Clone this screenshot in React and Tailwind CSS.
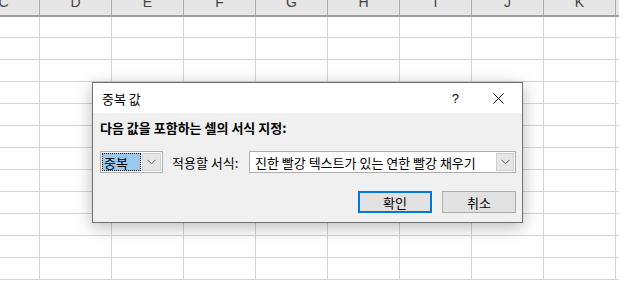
import React from "react";

const cols = ["C", "D", "E", "F", "G", "H", "I", "J", "K", "L"];
const rows = Array.from({ length: 12 }, (_, i) => i);

function Chevron() {
  return (
    <svg width="9" height="6" viewBox="0 0 9 6" fill="none">
      <path d="M0.5 0.8 L4.5 4.8 L8.5 0.8" stroke="#5a5a5a" strokeWidth="1" />
    </svg>
  );
}

function Sheet() {
  return (
    <div className="-ml-[32px] flex flex-col">
      {/* column header */}
      <div className="flex h-[17px] bg-[#e6e6e6] border-b-2 border-[#9e9e9e]">
        {cols.map((c) => (
          <div
            key={c}
            className="w-[72px] shrink-0 border-r border-[#ababab] flex justify-center overflow-hidden"
          >
            <span className="-mt-[5px] text-[14px] leading-[14px] text-[#444]">{c}</span>
          </div>
        ))}
      </div>
      {rows.map((r) => (
        <div
          key={r}
          className={`flex border-b border-[#d4d4d4] ${r === 0 ? "h-[21px]" : "h-[22px]"}`}
        >
          {cols.map((c) => (
            <div key={c} className="w-[72px] shrink-0 border-r border-[#d4d4d4]" />
          ))}
        </div>
      ))}
    </div>
  );
}

export default function App() {
  return (
    <div
      className="relative w-[619px] h-[283px] overflow-hidden bg-white"
      style={{ fontFamily: '"Liberation Sans", "Noto Sans CJK KR", sans-serif' }}
    >
      <Sheet />

      {/* dialog */}
      <div
        className="absolute left-[92px] top-[82px] w-[431px] h-[141px] border border-[#707070] bg-[#f0f0f0] shadow-[0_4px_16px_rgba(0,0,0,0.28)] flex flex-col text-[13px] text-black"
        style={{ fontFamily: '"Noto Sans CJK KR", sans-serif' }}
      >
        <div className="h-[30px] bg-white flex items-center pl-[9px]">
          <span className="leading-none">중복 값</span>
          <span className="ml-auto mr-[34px] text-[13px] leading-none" style={{ fontFamily: '"Liberation Sans", sans-serif' }}>?</span>
          <svg width="11" height="11" viewBox="0 0 11 11" className="mr-[18px]">
            <path d="M0.5 0.5 L10.5 10.5 M10.5 0.5 L0.5 10.5" stroke="#000" strokeWidth="1" />
          </svg>
        </div>

        <div className="pl-[7px] pr-[6px]">
          <div className="mt-[7px] h-[16px] leading-[16px] font-bold">다음 값을 포함하는 셀의 서식 지정:</div>

          <div className="mt-[15px] flex items-center h-[22px]">
            <div className="w-[63px] h-[22px] border border-[#adadad] bg-white flex items-stretch p-px">
              <div className="flex-1 bg-[#99c9ef] border border-dotted border-black flex items-center pl-px leading-none">
                중복
              </div>
              <div className="w-[19px] ml-px bg-[#e5e5e5] border border-[#cfcfcf] flex items-center justify-center">
                <Chevron />
              </div>
            </div>
            <div className="ml-[9px] w-[77px] leading-none">적용할 서식:</div>
            <div className="flex-1 h-[22px] border border-[#adadad] bg-white flex items-stretch p-px">
              <div className="flex-1 flex items-center pl-[4px] leading-none">
                진한 빨강 텍스트가 있는 연한 빨강 채우기
              </div>
              <div className="w-[18px] bg-[#e5e5e5] border border-[#cfcfcf] flex items-center justify-center">
                <Chevron />
              </div>
            </div>
          </div>

          <div className="mt-[18px] flex justify-end gap-[10px]">
            <button className="w-[74px] h-[22px] bg-[#e1e1e1] border-2 border-[#0078d7] flex items-center justify-center leading-none">
              확인
            </button>
            <button className="w-[74px] h-[22px] bg-[#e1e1e1] border border-[#adadad] flex items-center justify-center leading-none">
              취소
            </button>
          </div>
        </div>
      </div>
    </div>
  );
}
